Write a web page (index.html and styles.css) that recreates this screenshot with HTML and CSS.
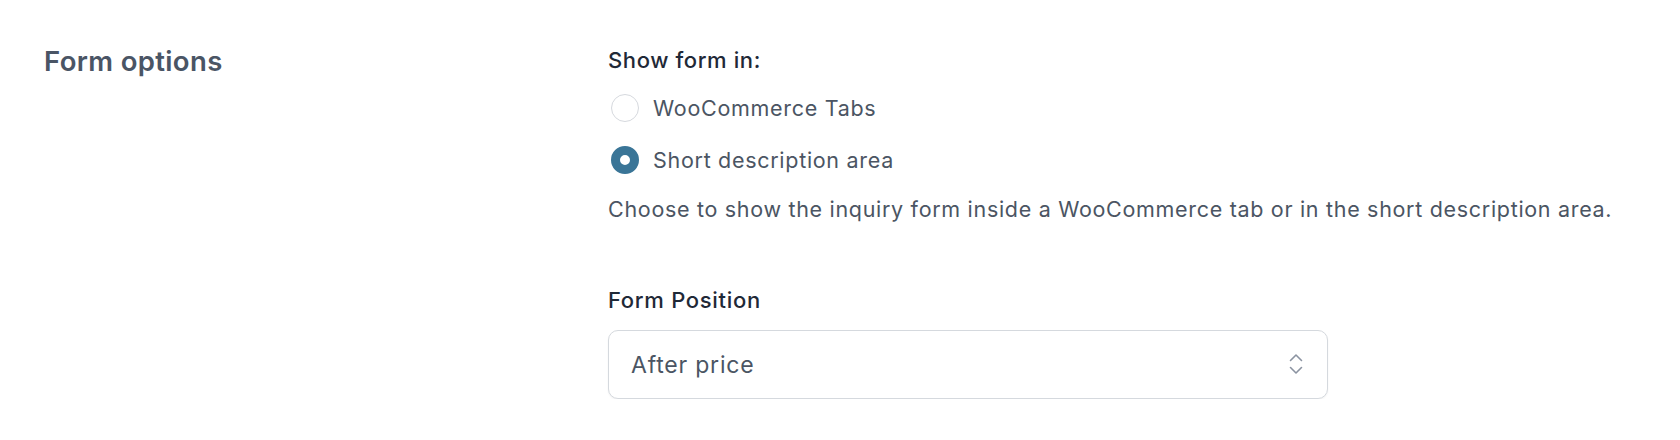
FILE: index.html
```html
<!DOCTYPE html>
<html>
<head>
    <title>Form options</title>
    <meta charset="utf-8" />
    <link rel="stylesheet" href="styles.css">
</head>
<body>
    <!-- Opções do formulário -->
    <div class="section">
        <h2 class="section-title">Form options</h2>

        <div class="section-body">
            <fieldset class="group">
                <legend class="group-label">Show form in:</legend>
                <div class="radio-list">
                    <label class="radio-row">
                        <input type="radio" name="form_location" value="tabs" class="radio" />
                        <span>WooCommerce Tabs</span>
                    </label>
                    <label class="radio-row">
                        <input type="radio" name="form_location" value="short" class="radio" checked />
                        <span>Short description area</span>
                    </label>
                </div>
                <p class="help">Choose to show the inquiry form inside a WooCommerce tab or in the short description area.</p>
            </fieldset>

            <div class="field">
                <label for="form_position" class="field-label">Form Position</label>
                <div class="select-wrap">
                    <select id="form_position" name="form_position" class="select">
                        <option>After price</option>
                        <option>Before price</option>
                        <option>After add to cart</option>
                    </select>
                    <svg class="select-icon" width="14" height="22" viewBox="0 0 14 22" fill="none">
                        <path d="M1.5 7.5 L7 2 L12.5 7.5" stroke="#8b93a1" stroke-width="1.6" stroke-linecap="round" stroke-linejoin="round" />
                        <path d="M1.5 14.5 L7 20 L12.5 14.5" stroke="#8b93a1" stroke-width="1.6" stroke-linecap="round" stroke-linejoin="round" />
                    </svg>
                </div>
            </div>
        </div>
    </div>
</body>
</html>
```

FILE: styles.css
```css
body {
    margin: 0;
    background-color: #ffffff;
    font-family: Inter, "Noto Sans", sans-serif;
    color: #4b5563;
}

.section {
    display: grid;
    grid-template-columns: 564px 1fr;
    padding: 41px 45px 0 44px;
}

.section-title {
    margin: 2px 0 0 0;
    font-size: 27.5px;
    line-height: 36px;
    font-weight: 600;
    letter-spacing: 0.35px;
    color: #4a5565;
}

.section-body {
    padding-top: 4px;
}

.group {
    margin: 0;
    padding: 0;
    border: none;
}

.group-label {
    padding: 0;
    font-size: 22px;
    line-height: 30px;
    font-weight: 500;
    letter-spacing: 0.6px;
    color: #1f2937;
}

.radio-list {
    display: flex;
    flex-direction: column;
    gap: 22px;
    margin-top: 18px;
}

.radio-row {
    display: flex;
    align-items: center;
    gap: 14px;
    height: 30px;
    font-size: 21.5px;
    line-height: 30px;
    letter-spacing: 0.7px;
    color: #4b5563;
}

.radio {
    appearance: none;
    -webkit-appearance: none;
    width: 28px;
    height: 28px;
    margin: 0 0 0 3px;
    border: 1px solid #d6d9de;
    border-radius: 50%;
    background-color: #ffffff;
}

.radio:checked {
    border: 9px solid #3a7597;
}

.help {
    margin: 19px 0 0 0;
    font-size: 21.5px;
    line-height: 30px;
    letter-spacing: 0.69px;
    color: #4b5563;
}

.field {
    margin-top: 61px;
}

.field-label {
    display: block;
    font-size: 22px;
    line-height: 30px;
    font-weight: 500;
    letter-spacing: 0.7px;
    color: #1f2937;
}

.select-wrap {
    position: relative;
    width: 720px;
    margin-top: 15px;
}

.select {
    appearance: none;
    -webkit-appearance: none;
    box-sizing: border-box;
    width: 100%;
    height: 69px;
    padding: 0 60px 0 22px;
    border: 1px solid #d5d9de;
    border-radius: 10px;
    background-color: #ffffff;
    box-shadow: 0 1px 2px rgba(0, 0, 0, 0.05);
    font-family: Inter, "Noto Sans", sans-serif;
    font-size: 23px;
    letter-spacing: 0.8px;
    color: #4b5563;
}

.select-icon {
    position: absolute;
    right: 25px;
    top: 23px;
    pointer-events: none;
}
```
